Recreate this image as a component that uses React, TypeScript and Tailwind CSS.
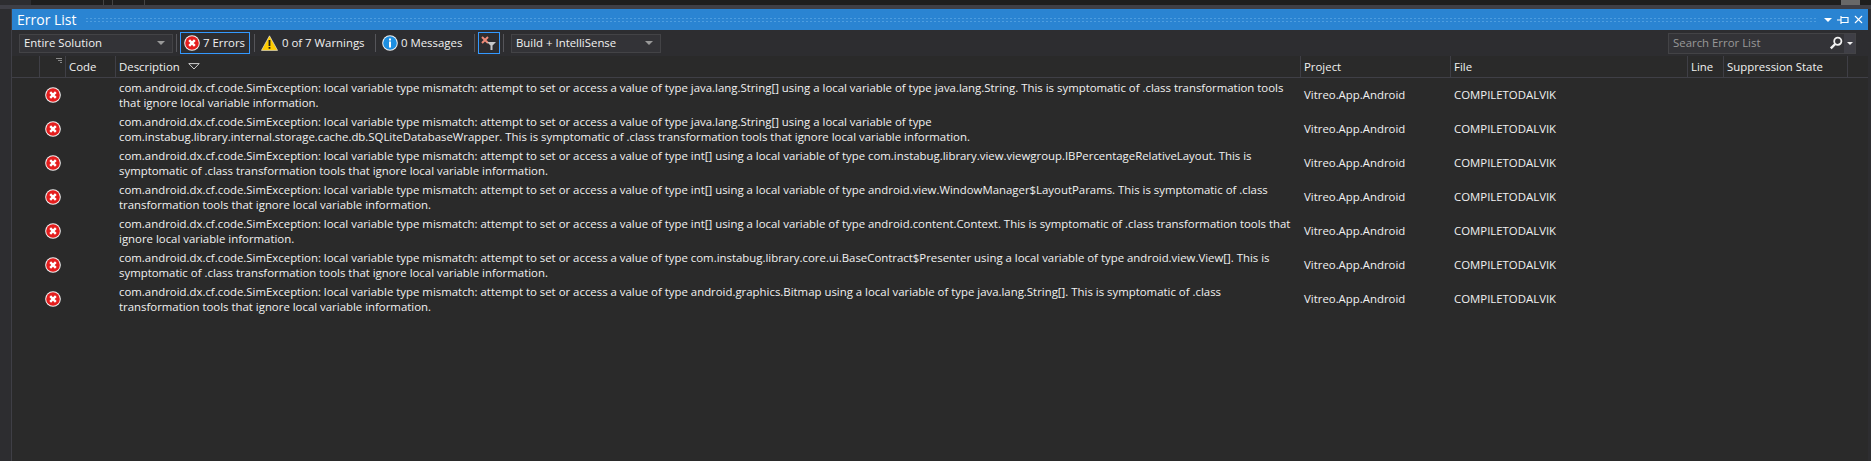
import { X } from 'lucide-react';

const columns = [
  { label: '', width: 'w-[27px]' },
  { label: 'Code', width: 'w-[50px]' },
  { label: 'Description', width: 'w-[1185px]' },
  { label: 'Project', width: 'w-[150px]' },
  { label: 'File', width: 'w-[237px]' },
  { label: 'Line', width: 'w-[36px]' },
  { label: 'Suppression State', width: 'w-[124px]' },
];

const errors = [
  [
    'com.android.dx.cf.code.SimException: local variable type mismatch: attempt to set or access a value of type java.lang.String[] using a local variable of type java.lang.String. This is symptomatic of .class transformation tools',
    'that ignore local variable information.',
  ],
  [
    'com.android.dx.cf.code.SimException: local variable type mismatch: attempt to set or access a value of type java.lang.String[] using a local variable of type',
    'com.instabug.library.internal.storage.cache.db.SQLiteDatabaseWrapper. This is symptomatic of .class transformation tools that ignore local variable information.',
  ],
  [
    'com.android.dx.cf.code.SimException: local variable type mismatch: attempt to set or access a value of type int[] using a local variable of type com.instabug.library.view.viewgroup.IBPercentageRelativeLayout. This is',
    'symptomatic of .class transformation tools that ignore local variable information.',
  ],
  [
    'com.android.dx.cf.code.SimException: local variable type mismatch: attempt to set or access a value of type int[] using a local variable of type android.view.WindowManager$LayoutParams. This is symptomatic of .class',
    'transformation tools that ignore local variable information.',
  ],
  [
    'com.android.dx.cf.code.SimException: local variable type mismatch: attempt to set or access a value of type int[] using a local variable of type android.content.Context. This is symptomatic of .class transformation tools that',
    'ignore local variable information.',
  ],
  [
    'com.android.dx.cf.code.SimException: local variable type mismatch: attempt to set or access a value of type com.instabug.library.core.ui.BaseContract$Presenter using a local variable of type android.view.View[]. This is',
    'symptomatic of .class transformation tools that ignore local variable information.',
  ],
  [
    'com.android.dx.cf.code.SimException: local variable type mismatch: attempt to set or access a value of type android.graphics.Bitmap using a local variable of type java.lang.String[]. This is symptomatic of .class',
    'transformation tools that ignore local variable information.',
  ],
];

function ErrorIcon({ size = 16 }: { size?: number }) {
  return (
    <svg width={size} height={size} viewBox="0 0 16 16" className="shrink-0">
      <circle cx="8" cy="8" r="7.8" fill="#f4f4f4" />
      <circle cx="8" cy="8" r="6.8" fill="#e41e1e" />
      <path d="M5.2 5.2l5.6 5.6M10.8 5.2l-5.6 5.6" stroke="#fff" strokeWidth="2.4" />
    </svg>
  );
}

function WarningIcon() {
  return (
    <svg width="17" height="16" viewBox="0 0 17 16" className="shrink-0">
      <path d="M8.5 .8L16.6 15.4H.4z" fill="#ffcc00" stroke="#f4f4f4" strokeWidth=".6" />
      <path d="M7.6 5h1.8v6H7.6zM7.6 12h1.8v1.8H7.6z" fill="#1e1e1e" />
    </svg>
  );
}

function InfoIcon() {
  return (
    <svg width="16" height="16" viewBox="0 0 16 16" className="shrink-0">
      <circle cx="8" cy="8" r="7.8" fill="#f4f4f4" />
      <circle cx="8" cy="8" r="6.8" fill="#1d8fe1" />
      <path d="M7 3.4h2v2H7zM7 6.6h2v6H7z" fill="#fff" />
    </svg>
  );
}

function Caret() {
  return <span className="w-0 h-0 border-x-[4px] border-x-transparent border-t-[4px] border-t-[#999999]" />;
}

function Separator() {
  return <div className="w-px h-[18px] bg-[#55555a] shrink-0" />;
}

export default function App() {
  return (
    <div
      className="w-[1871px] h-[461px] flex flex-col overflow-hidden bg-[#2d2d30] text-[11.4px] text-[#f1f1f1]"
      style={{ fontFamily: '"Open Sans", "Liberation Sans", sans-serif' }}
    >
      {/* Editor sliver above the tool window */}
      <div className="h-[5px] flex shrink-0 bg-[#1e1e1e]">
        <div className="w-[31px] bg-[#2d2d30]" />
        <div className="w-[73px] border-r border-[#444444]" />
        <div className="w-[9px] border-r border-[#444444]" />
        <div className="w-[32px] border-r border-[#444444]" />
        <div className="w-[1696px]" />
        <div className="w-[19px] bg-[#686868]" />
      </div>
      <div className="h-[4px] shrink-0 bg-[#3f3f46]" />

      <div className="flex-1 flex flex-col min-h-0 ml-[11px] mr-[3px] border-l border-[#3f3f46]">
        {/* Title bar */}
        <div className="h-[21px] shrink-0 flex items-center bg-[#2a84d2] pl-[5px] pr-[3px] text-white">
          <span className="text-[14px] leading-none">Error List</span>
          <div className="flex-1 h-[6px] ml-[8px] mr-[7px] bg-[radial-gradient(#4d9ddf_0.7px,transparent_0.8px)] bg-[size:4px_3px]" />
          <span className="w-0 h-0 border-x-[4px] border-x-transparent border-t-[4px] border-t-white mr-[5px]" />
          <svg width="12" height="10" viewBox="0 0 12 10" className="mr-[3px]">
            <path d="M0 5h4M4 2.5h7v5H4zM4 1v8" stroke="#fff" strokeWidth="1.2" fill="none" />
          </svg>
          <X size={13} strokeWidth={2} />
        </div>

        {/* Toolbar */}
        <div className="h-[26px] shrink-0 flex items-center bg-[#2d2d30] pl-[7px]">
          <div className="w-[154px] h-[19px] flex items-center justify-between bg-[#333337] border border-[#434346] pl-[4px] pr-[7px]">
            <span>Entire Solution</span>
            <Caret />
          </div>
          <div className="w-[3px]" />
          <Separator />
          <div className="w-[3px]" />
          <div className="w-[70px] h-[22px] flex items-center gap-[3px] border border-[#3399ff] pl-[3px]">
            <ErrorIcon />
            <span>7 Errors</span>
          </div>
          <div className="w-[4px]" />
          <Separator />
          <div className="flex items-center gap-[4px] pl-[6px] w-[120px]">
            <WarningIcon />
            <span>0 of 7 Warnings</span>
          </div>
          <Separator />
          <div className="flex items-center gap-[3px] pl-[6px] w-[98px]">
            <InfoIcon />
            <span>0 Messages</span>
          </div>
          <Separator />
          <div className="w-[3px]" />
          <div className="w-[22px] h-[22px] flex items-center justify-center border border-[#3399ff]">
            <svg width="16" height="14" viewBox="0 0 16 14">
              <path d="M1 1l6 6M7 1L1 7" stroke="#ee8a78" strokeWidth="2" />
              <path d="M6 6h9l-3.5 3.5V14h-2V9.5z" fill="#c8c8c8" />
            </svg>
          </div>
          <div className="w-[3px]" />
          <Separator />
          <div className="w-[7px]" />
          <div className="w-[150px] h-[19px] flex items-center justify-between bg-[#333337] border border-[#434346] pl-[4px] pr-[7px]">
            <span>Build + IntelliSense</span>
            <Caret />
          </div>
          <div className="flex-1" />
          <div className="w-[188px] h-[21px] flex items-center bg-[#333337] border border-[#434346]">
            <span className="flex-1 pl-[4px] text-[#999999]">Search Error List</span>
            <svg width="14" height="14" viewBox="0 0 14 14" className="mr-[1px]">
              <circle cx="8.8" cy="5.2" r="3.6" stroke="#f1f1f1" strokeWidth="1.8" fill="none" />
              <path d="M6.2 8L1.8 12.4" stroke="#f1f1f1" strokeWidth="2.4" />
            </svg>
            <div className="w-[11px] h-full flex items-center justify-center bg-[#3f3f46]">
              <span className="w-0 h-0 border-x-[3px] border-x-transparent border-t-[3px] border-t-[#f1f1f1]" />
            </div>
          </div>
          <div className="w-[12px]" />
        </div>

        {/* Error table */}
        <div className="flex-1 min-h-0 bg-[#2a2a2a]">
          <div className="h-[22px] flex items-stretch pl-[27px] border-b border-[#3f3f46]">
            {columns.map((col, i) => (
              <div
                key={col.label || i}
                className={`${col.width} shrink-0 flex items-center pl-[3px] border-r border-[#3f3f46] ${i === 0 ? 'border-l relative' : ''}`}
              >
                {col.label}
                {col.label === 'Description' && (
                  <svg width="12" height="7" viewBox="0 0 12 7" className="ml-[8px]">
                    <path d="M.8.6h10.4L6 6z" fill="none" stroke="#d0d0d0" strokeWidth="1" />
                  </svg>
                )}
                {i === 0 && (
                  <svg width="6" height="6" viewBox="0 0 6 6" className="absolute right-[3px] top-[2px]">
                    <path d="M0 .5h6M2 2.5h4M4 4.5h2" stroke="#8a8a8a" strokeWidth="1" />
                  </svg>
                )}
              </div>
            ))}
          </div>
          {errors.map((lines, i) => (
            <div key={i} className="h-[34px] flex">
              <div className="w-[104px] shrink-0 flex items-center pl-[33px]">
                <ErrorIcon />
              </div>
              <div className="w-[1185px] shrink-0 pl-[3px] pt-[2px] leading-[15px]">
                {lines.map(line => (
                  <div key={line} className="whitespace-nowrap">{line}</div>
                ))}
              </div>
              <div className="w-[150px] shrink-0 flex items-center pl-[3px]">Vitreo.App.Android</div>
              <div className="w-[237px] shrink-0 flex items-center pl-[3px]">COMPILETODALVIK</div>
            </div>
          ))}
        </div>
      </div>
    </div>
  );
}
